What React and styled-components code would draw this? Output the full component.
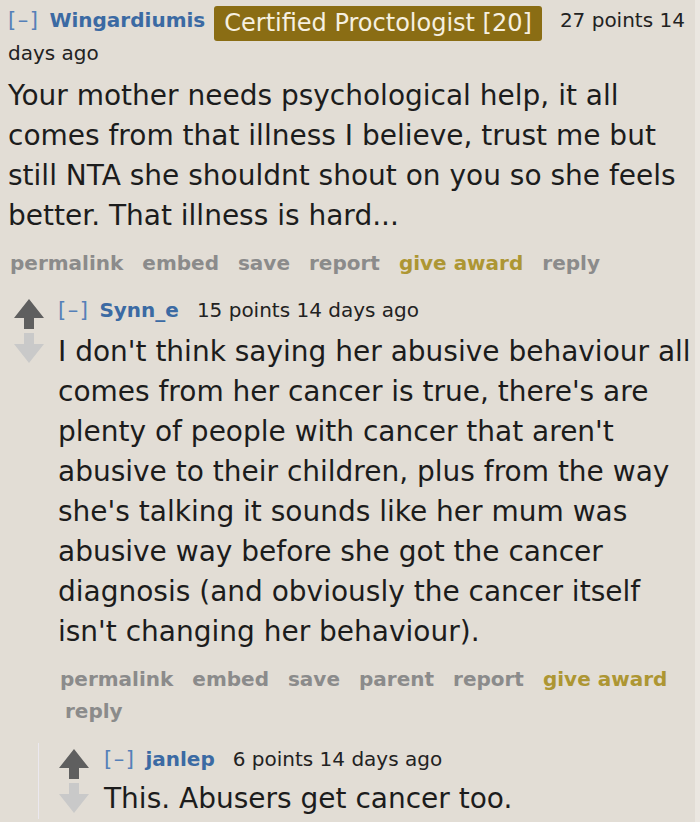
import React from "react";
import styled, { createGlobalStyle } from "styled-components";

const Global = createGlobalStyle`
  html, body { margin: 0; padding: 0; background: #e2ddd5; }
  body { font-family: "DejaVu Sans", Verdana, sans-serif; }
`;

const Page = styled.div`
  width: 700px;
  height: 822px;
  box-sizing: border-box;
  overflow: hidden;
  background: #e2ddd5;
  border-right: 5px solid #ebe7e1;
  padding: 4px 0 0 8px;
`;

const Comment = styled.div`
  display: flex;
  align-items: flex-start;
  gap: ${(p) => p.$gap || 14}px;
  margin-left: ${(p) => p.$indent || 0}px;
  margin-top: ${(p) => p.$top || 0}px;
`;

const VoteCol = styled.div`
  flex: 0 0 30px;
  display: flex;
  flex-direction: column;
  gap: 4px;
  padding-top: ${(p) => p.$pad || 5}px;
`;

const Entry = styled.div`
  flex: 1;
  min-width: 0;
`;

const Tagline = styled.div`
  font-size: 20px;
  line-height: 32px;
  color: #222;
`;

const Expand = styled.span`
  color: #5580b8;
  font-size: 21px;
  letter-spacing: 1.5px;
  margin-right: 10px;
`;

const Author = styled.span`
  color: #3b6aa3;
  font-weight: bold;
`;

const Flair = styled.span`
  display: inline-block;
  margin: -4px 0 -4px 9px;
  padding: 0 10px;
  background: #8a6d14;
  color: #f6f0e0;
  font-size: 24px;
  line-height: 35px;
  border-radius: 3px;
  vertical-align: -4px;
`;

const Score = styled.span`
  margin-left: 18px;
`;

const Body = styled.div`
  font-size: 28px;
  line-height: 40px;
  color: #1c1c1c;
  margin: ${(p) => p.$m || "7px 0 13px"};
`;

const Buttons = styled.ul`
  list-style: none;
  margin: 0;
  padding: 0;
  display: flex;
  flex-wrap: wrap;
  column-gap: 5px;
  font-size: 20px;
  font-weight: bold;
  line-height: ${(p) => p.$lh || 28}px;
`;

const Btn = styled.li`
  padding: 0 7px;
  color: ${(p) => (p.$gold ? "#ad9633" : "#8b8b8b")};
  &:first-child { padding-left: 2px; }
`;

const Children = styled.div`
  margin-left: 30px;
  margin-top: 16px;
  border-left: 1px solid #ebe8ef;
  padding-left: 20px;
`;

const Arrow = ({ up }) =>
  up ? (
    <svg width="30" height="30" viewBox="0 0 30 30">
      <path d="M15 0 L30 19 H20 V30 H10 V19 H0 Z" fill="#5f5f5f" />
    </svg>
  ) : (
    <svg width="30" height="30" viewBox="0 0 30 30">
      <path d="M10 0 H20 V11 H30 L15 30 L0 11 H10 Z" fill="#c9c9c9" />
    </svg>
  );

const Votes = ({ pad }) => (
  <VoteCol $pad={pad}>
    <Arrow up />
    <Arrow />
  </VoteCol>
);

const ButtonRow = ({ items, lh }) => (
  <Buttons $lh={lh}>
    {items.map((b) => (
      <Btn key={b} $gold={b === "give award"}>
        {b}
      </Btn>
    ))}
  </Buttons>
);

export default function App() {
  return (
    <>
      <Global />
      <Page>
        <Entry>
          <Tagline>
            <Expand>[–]</Expand>
            <Author>Wingardiumis</Author>
            <Flair>Certified Proctologist [20]</Flair>
            <Score>27 points 14 days ago</Score>
          </Tagline>
          <Body>
            Your mother needs psychological help, it all comes from that illness
            I believe, trust me but still NTA she shouldnt shout on you so she
            feels better. That illness is hard...
          </Body>
          <ButtonRow
            items={["permalink", "embed", "save", "report", "give award", "reply"]}
          />
        </Entry>

        <Comment $indent={6} $top={17}>
          <Votes pad={5} />
          <Entry>
            <Tagline>
              <Expand>[–]</Expand>
              <Author>Synn_e</Author>
              <Score>15 points 14 days ago</Score>
            </Tagline>
            <Body $m="6px 0 11px">
              I don't think saying her abusive behaviour all comes from her
              cancer is true, there's are plenty of people with cancer that
              aren't abusive to their children, plus from the way she's talking
              it sounds like her mum was abusive way before she got the cancer
              diagnosis (and obviously the cancer itself isn't changing her
              behaviour).
            </Body>
            <ButtonRow
              lh={32}
              items={[
                "permalink",
                "embed",
                "save",
                "parent",
                "report",
                "give award",
                "reply",
              ]}
            />
          </Entry>
        </Comment>

        <Children>
          <Comment $gap={15}>
            <Votes pad={6} />
            <Entry>
              <Tagline>
                <Expand>[–]</Expand>
                <Author>janlep</Author>
                <Score>6 points 14 days ago</Score>
              </Tagline>
              <Body $m="4px 0 0">This. Abusers get cancer too.</Body>
            </Entry>
          </Comment>
        </Children>
      </Page>
    </>
  );
}
